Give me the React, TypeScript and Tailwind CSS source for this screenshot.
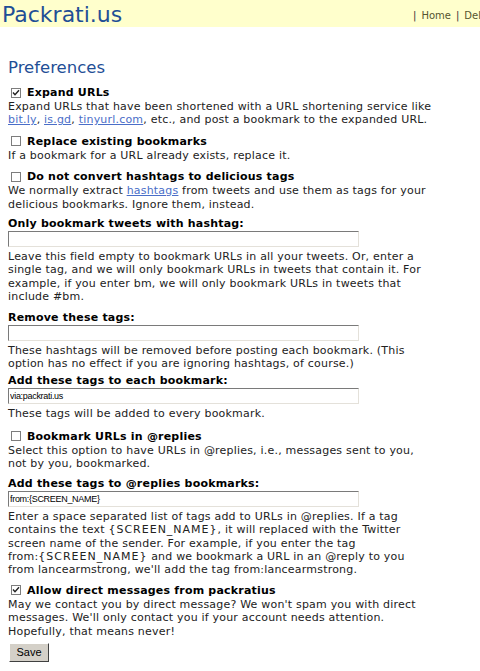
import React from 'react'

const font = { fontFamily: '"DejaVu Sans", Verdana, sans-serif' }

function Check({ checked }: { checked?: boolean }) {
  return (
    <span className="ml-[3px] mr-[6px] flex h-[10px] w-[10px] shrink-0 items-center justify-center border border-[#7d7d7d] bg-white">
      {checked && (
        <svg width="8" height="8" viewBox="0 0 8 8" aria-hidden>
          <path d="M1 3.5 L3 5.8 L7 1.2" stroke="#222" strokeWidth="1.4" fill="none" />
        </svg>
      )}
    </span>
  )
}

function CheckItem({
  label,
  checked,
  className,
  children,
}: {
  label: string
  checked?: boolean
  className?: string
  children: React.ReactNode
}) {
  return (
    <div className={className ?? 'mb-[7px]'}>
      <label className="flex h-[15px] items-center">
        <Check checked={checked} />
        <span className="text-[11px] font-bold leading-[15px] tracking-[0.2px] text-black">{label}</span>
      </label>
      <p className="max-w-[424px] text-[11px] leading-[13.4px] tracking-[0.2px] text-[#222]">{children}</p>
    </div>
  )
}

function TextItem({
  label,
  value,
  className,
  children,
}: {
  label: string
  value?: string
  className?: string
  children: React.ReactNode
}) {
  return (
    <div className={className ?? 'mb-[6px]'}>
      <div className="text-[11px] font-bold leading-[15px] tracking-[0.2px] text-black">{label}</div>
      <input
        readOnly
        value={value ?? ''}
        className="block h-[16px] w-[351px] border border-t-[#7a7a7a] border-l-[#7a7a7a] border-b-[#e4e1da] border-r-[#e4e1da] bg-white px-[1px] text-[9px] leading-[14px] text-black outline-none"
        style={{ fontFamily: '"Liberation Sans", Arial, sans-serif', letterSpacing: '-0.3px' }}
      />
      <p className="mt-[3px] max-w-[424px] text-[11px] leading-[13.4px] tracking-[0.2px] text-[#222]">
        {children}
      </p>
    </div>
  )
}

const Link = ({ children }: { children: React.ReactNode }) => (
  <a className="text-[#4a6ec8] underline">{children}</a>
)

// Verdana's capitals run wider than DejaVu's
const Caps = ({ children }: { children: React.ReactNode }) => (
  <span className="tracking-[1px]">{children}</span>
)

export default function App() {
  return (
    <div className="min-h-[671px] w-[480px] overflow-hidden bg-white" style={font}>
      <header className="flex h-[27px] items-start overflow-hidden bg-[#ffffcc]">
        <h1 className="pl-[2px] pt-[4px] text-[22px] leading-[22px] text-[#1f4f96]">Packrati.us</h1>
        <nav className="ml-auto flex w-[67px] shrink-0 items-center gap-[5px] overflow-hidden whitespace-nowrap pt-[10px] text-[10px] leading-[12px] text-[#555530]">
          <span className="text-[#333]">|</span>
          <a>Home</a>
          <span className="text-[#333]">|</span>
          <a>Delicious</a>
        </nav>
      </header>

      <main className="px-[8px]">
        <h2 className="mb-[7px] mt-[31px] text-[16.5px] leading-[20px] text-[#1f4f96]">Preferences</h2>

        <CheckItem label="Expand URLs" checked>
          Expand URLs that have been shortened with a URL shortening service like{' '}
          <Link>bit.ly</Link>, <Link>is.gd</Link>, <Link>tinyurl.com</Link>, etc., and post a bookmark to
          the expanded URL.
        </CheckItem>

        <CheckItem label="Replace existing bookmarks">
          If a bookmark for a URL already exists, replace it.
        </CheckItem>

        <CheckItem label="Do not convert hashtags to delicious tags" className="mb-[5px]">
          We normally extract <Link>hashtags</Link> from tweets and use them as tags for your delicious
          bookmarks. Ignore them, instead.
        </CheckItem>

        <TextItem label="Only bookmark tweets with hashtag:">
          Leave this field empty to bookmark URLs in all your tweets. Or, enter a single tag, and we will
          only bookmark URLs in tweets that contain it. For example, if you enter bm, we will only
          bookmark URLs in tweets that include #bm.
        </TextItem>

        <TextItem label="Remove these tags:" className="mb-[3px]">
          These hashtags will be removed before posting each bookmark. (This option has no effect if you
          are ignoring hashtags, of course.)
        </TextItem>

        <TextItem label="Add these tags to each bookmark:" value="via:packrati.us" className="mb-[8px]">
          These tags will be added to every bookmark.
        </TextItem>

        <CheckItem label="Bookmark URLs in @replies" className="mb-[5px]">
          Select this option to have URLs in @replies, i.e., messages sent to you, not by you,
          bookmarked.
        </CheckItem>

        <TextItem label="Add these tags to @replies bookmarks:" value="from:{SCREEN_NAME}">
          Enter a space separated list of tags add to URLs in @replies. If a tag contains the text{' '}
          <span className="whitespace-nowrap">
            <Caps>{'{SCREEN_NAME}'}</Caps>,
          </span>{' '}
          it will replaced with the Twitter screen name of the sender. For example, if you enter the tag{' '}
          <span className="whitespace-nowrap">
            from:<Caps>{'{SCREEN_NAME}'}</Caps>
          </span>{' '}
          and we bookmark a URL in an @reply to you from lancearmstrong, we'll add the tag
          from:lancearmstrong.
        </TextItem>

        <CheckItem label="Allow direct messages from packratius" checked className="mb-[5px]">
          May we contact you by direct message? We won't spam you with direct messages. We'll only
          contact you if your account needs attention. Hopefully, that means never!
        </CheckItem>

        <button
          className="ml-px block h-[19px] w-[40px] border border-t-white border-l-white border-b-[#404040] border-r-[#404040] bg-[#d4d0c8] text-[11px] leading-[15px] text-black"
          style={{ fontFamily: '"Liberation Sans", Arial, sans-serif' }}
        >
          Save
        </button>
      </main>
    </div>
  )
}
